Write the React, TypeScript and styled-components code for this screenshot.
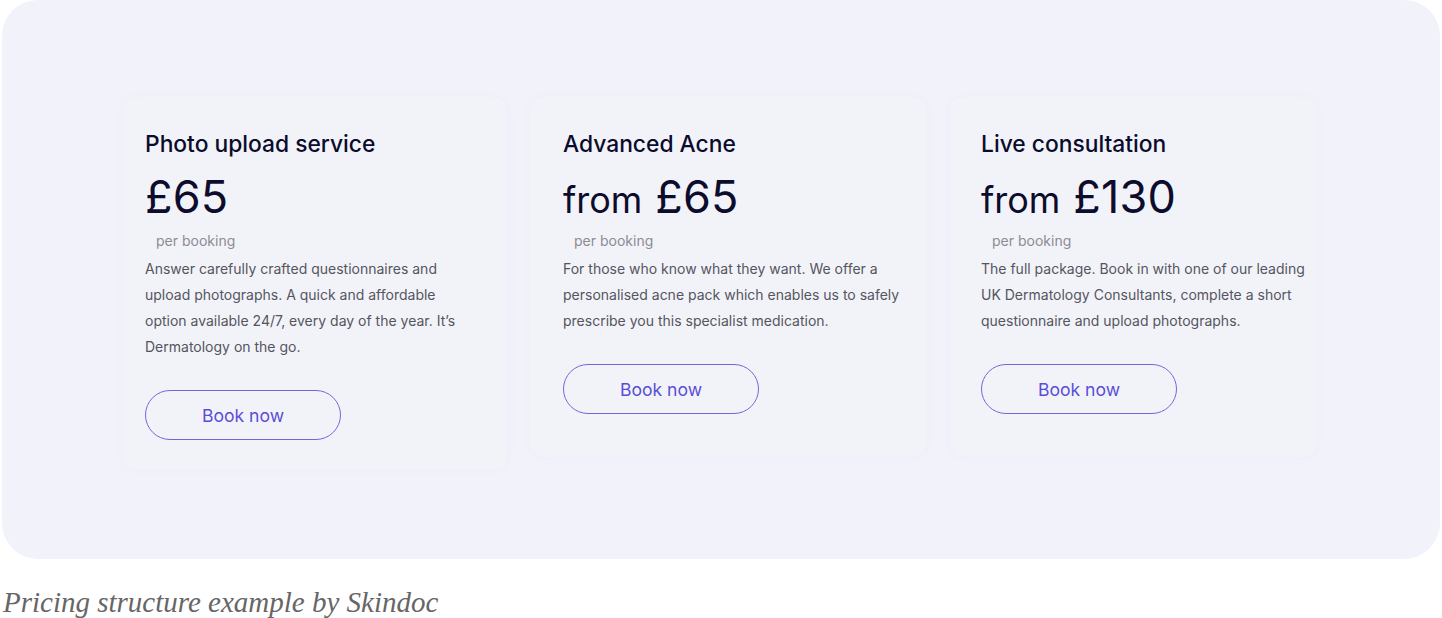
import React from "react";
import styled, { createGlobalStyle } from "styled-components";

const Global = createGlobalStyle`
  html, body { margin: 0; padding: 0; background: #ffffff; }
  body { font-family: Inter, "Noto Sans", sans-serif; }
`;

const Page = styled.div`
  width: 1442px;
  display: flex;
  flex-direction: column;
`;

const Panel = styled.section`
  margin: 0 2px;
  height: 559px;
  box-sizing: border-box;
  background: #f1f2fa;
  border-radius: 36px;
  padding: 97px 0 0 121px;
`;

const Grid = styled.div`
  display: grid;
  grid-template-columns: 384px 397px 367px;
  column-gap: 23px;
  align-items: start;
`;

const Card = styled.article<{ $tall?: boolean; $inset: number }>`
  box-sizing: border-box;
  background: #f2f3f9;
  border-radius: 14px;
  box-shadow: 0 0 10px rgba(205, 207, 222, 0.1);
  padding: 32px 0 0 ${(p) => p.$inset}px;
  height: ${(p) => (p.$tall ? "373px" : "360px")};
  display: flex;
  flex-direction: column;
  align-items: flex-start;
`;

const Title = styled.h3`
  margin: 0;
  font-family: Inter, sans-serif;
  font-weight: 500;
  font-size: 22.8px;
  line-height: 30px;
  color: #0b0b2c;
`;

const Price = styled.div`
  margin-top: 13px;
  font-family: Inter, sans-serif;
  font-weight: 400;
  font-size: 45px;
  line-height: 50px;
  color: #0d0c2c;
  letter-spacing: 0.2px;
`;

const From = styled.span`
  font-size: 36px;
  line-height: 0;
  letter-spacing: 0;
`;

const Per = styled.div`
  margin-top: 9px;
  padding-left: 11px;
  font-size: 14px;
  line-height: 20px;
  color: #8c8c95;
`;

const Body = styled.p`
  margin: 5px 0 0;
  font-size: 14px;
  line-height: 26px;
  color: #55555f;
  white-space: nowrap;
`;

const Button = styled.button`
  margin-top: 30px;
  width: 196px;
  height: 50px;
  box-sizing: border-box;
  border: 1px solid #7366dc;
  border-radius: 25px;
  background: transparent;
  font-family: Inter, sans-serif;
  font-size: 17.6px;
  color: #5a4ed6;
  cursor: pointer;
`;

const Caption = styled.p`
  margin: 26px 0 0 3px;
  font-family: "Liberation Serif", serif;
  font-style: italic;
  font-size: 29px;
  line-height: 34px;
  color: #666666;
`;

type Plan = {
  title: string;
  from?: boolean;
  amount: string;
  text: string[];
  tall?: boolean;
  inset: number;
};

const plans: Plan[] = [
  {
    title: "Photo upload service",
    amount: "£65",
    text: [
      "Answer carefully crafted questionnaires and",
      "upload photographs. A quick and affordable",
      "option available 24/7, every day of the year. It’s",
      "Dermatology on the go.",
    ],
    tall: true,
    inset: 22,
  },
  {
    title: "Advanced Acne",
    from: true,
    amount: "£65",
    text: [
      "For those who know what they want. We offer a",
      "personalised acne pack which enables us to safely",
      "prescribe you this specialist medication.",
    ],
    inset: 33,
  },
  {
    title: "Live consultation",
    from: true,
    amount: "£130",
    text: [
      "The full package. Book in with one of our leading",
      "UK Dermatology Consultants, complete a short",
      "questionnaire and upload photographs.",
    ],
    inset: 31,
  },
];

export default function App() {
  return (
    <Page>
      <Global />
      <Panel>
        <Grid>
          {plans.map((p) => (
            <Card key={p.title} $tall={p.tall} $inset={p.inset}>
              <Title>{p.title}</Title>
              <Price>
                {p.from && (
                  <>
                    <From>from</From>{" "}
                  </>
                )}
                {p.amount}
              </Price>
              <Per>per booking</Per>
              <Body>
                {p.text.map((l, i) => (
                  <React.Fragment key={i}>
                    {l}
                    {i < p.text.length - 1 && <br />}
                  </React.Fragment>
                ))}
              </Body>
              <Button>Book now</Button>
            </Card>
          ))}
        </Grid>
      </Panel>
      <Caption>Pricing structure example by Skindoc</Caption>
    </Page>
  );
}
